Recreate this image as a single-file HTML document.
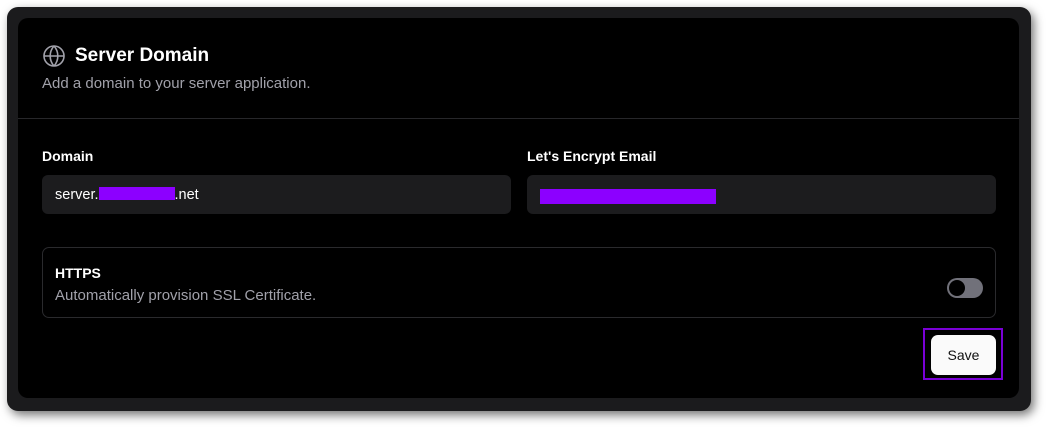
<!DOCTYPE html>
<html><head><meta charset="utf-8"><style>
*{margin:0;padding:0;box-sizing:border-box}
body{width:1054px;height:433px;background:#fff;font-family:"Liberation Sans",sans-serif;position:relative;overflow:hidden}
.outer{position:absolute;left:7px;top:7px;width:1024px;height:404px;background:#1b1b1d;border-radius:11px;box-shadow:3px 4px 10px rgba(0,0,0,.55)}
.card{position:absolute;left:18px;top:18px;width:1001px;height:380px;background:#000;border-radius:10px}
.abs{position:absolute}
.title{left:75px;top:45px;color:#fff;font-size:19px;font-weight:bold}
.sub{left:42px;top:75px;color:#a1a1aa;font-size:15px}
.div{left:18px;top:118px;width:1001px;height:1px;background:#27272a}
.lbl{color:#fff;font-size:14px;font-weight:bold}
.inp{background:#1c1c1e;border-radius:6px;height:39px;top:175px}
.red{background:#8c00ff}
.box{left:42px;top:247px;width:954px;height:71px;border:1px solid #2a2a2d;border-radius:7px}
</style></head><body>
<div class="outer"></div>
<div class="card"></div>
<svg class="abs" style="left:42px;top:44px" width="24" height="24" viewBox="0 0 24 24" fill="none" stroke="#a1a1aa" stroke-width="1.6"><circle cx="12" cy="12" r="10"/><path d="M2 12h20M12 2a15 15 0 0 1 0 20M12 2a15 15 0 0 0 0 20"/></svg>
<div class="abs title">Server Domain</div>
<div class="abs sub">Add a domain to your server application.</div>
<div class="abs div"></div>
<div class="abs lbl" style="left:42px;top:148px">Domain</div>
<div class="abs lbl" style="left:527px;top:148px">Let's Encrypt Email</div>
<div class="abs inp" style="left:42px;width:469px"></div>
<div class="abs inp" style="left:527px;width:469px"></div>
<div class="abs" style="left:55px;top:187px;color:#fff;font-size:14.5px">server.<span style="display:inline-block;width:76px;height:13px;background:#8c00ff;vertical-align:-1px"></span>.net</div>
<div class="abs red" style="left:540px;top:189px;width:176px;height:15px"></div>
<div class="abs box"></div>
<div class="abs lbl" style="left:55px;top:265px">HTTPS</div>
<div class="abs" style="left:55px;top:287px;color:#a1a1aa;font-size:15px">Automatically provision SSL Certificate.</div>
<div class="abs" style="left:947px;top:278px;width:36px;height:20px;border-radius:10px;background:#71717a"><div style="position:absolute;left:2px;top:2px;width:16px;height:16px;border-radius:50%;background:#000"></div></div>
<div class="abs" style="left:923px;top:328px;width:80px;height:52px;border:2px solid #7a00d6"></div>
<div class="abs" style="left:931px;top:335px;width:65px;height:40px;background:#fafafa;border-radius:7px;color:#111;font-size:14px;text-align:center;line-height:40px">Save</div>
</body></html>
